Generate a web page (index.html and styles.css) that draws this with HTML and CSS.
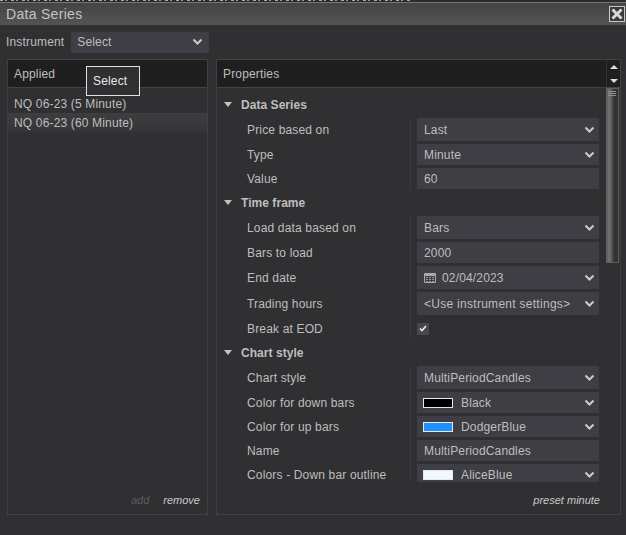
FILE: index.html
```html
<!DOCTYPE html>
<html lang="en">

<head>
  <meta charset="UTF-8">
  <title>Data Series</title>
  <link rel="stylesheet" href="styles.css">
</head>

<body>
  <div class="dialog">
    <div class="clip-strip"></div>
    <div class="titlebar">
      <span class="title">Data Series</span>
      <span class="close">
        <svg width="12" height="12" viewBox="0 0 12 12"><path d="M1.500 1.500l9 9M10.500 1.500l-9 9" stroke="#d8d8d8" stroke-width="3"/></svg>
      </span>
    </div>

    <div class="instrument">
      <span>Instrument</span>
      <div class="field select-box"><span>Select</span><svg class="chev" width="11" height="8" viewBox="0 0 11 8"><path d="M1.500 1.500l4 4 4-4" fill="none" stroke="#ccc" stroke-width="2"/></svg></div>
    </div>

    <div class="panels">
      <div class="panel applied">
        <div class="panel-head">Applied</div>
        <div class="tooltip">Select</div>
        <div class="list">
          <div class="list-item">NQ 06-23 (5 Minute)</div>
          <div class="list-item active">NQ 06-23 (60 Minute)</div>
        </div>
        <div class="panel-foot">
          <span class="link off">add</span>
          <span class="link">remove</span>
        </div>
      </div>

      <div class="panel props">
        <div class="panel-head">
          Properties
          <div class="spin">
            <svg width="8" height="4" viewBox="0 0 8 4"><path d="M4 0l4 4H0z" fill="#ddd"/></svg>
            <svg width="8" height="4" viewBox="0 0 8 4"><path d="M0 0h8L4 4z" fill="#ddd"/></svg>
          </div>
        </div>
        <div class="props-body">
          <div class="grid-area">
            <div class="group">
              <div class="group-title"><span class="caret"></span>Data Series</div>
              <div class="rows">
                <div class="row"><label>Price based on</label><div class="field"><span>Last</span><svg class="chev" width="11" height="8" viewBox="0 0 11 8"><path d="M1.500 1.500l4 4 4-4" fill="none" stroke="#ccc" stroke-width="2"/></svg></div></div>
                <div class="row"><label>Type</label><div class="field short"><span>Minute</span><svg class="chev" width="11" height="8" viewBox="0 0 11 8"><path d="M1.500 1.500l4 4 4-4" fill="none" stroke="#ccc" stroke-width="2"/></svg></div></div>
                <div class="row"><label>Value</label><div class="field short"><span>60</span></div></div>
              </div>
            </div>

            <div class="group">
              <div class="group-title"><span class="caret"></span>Time frame</div>
              <div class="rows">
                <div class="row"><label>Load data based on</label><div class="field"><span>Bars</span><svg class="chev" width="11" height="8" viewBox="0 0 11 8"><path d="M1.500 1.500l4 4 4-4" fill="none" stroke="#ccc" stroke-width="2"/></svg></div></div>
                <div class="row"><label>Bars to load</label><div class="field short"><span>2000</span></div></div>
                <div class="row"><label>End date</label><div class="field"><svg class="cal" width="12" height="10" viewBox="0 0 12 10"><path d="M.5 .5h11v9H.5z" fill="none" stroke="#aaa"/><path d="M1 2h10" stroke="#aaa" stroke-width="2"/><path d="M2 4.500h8M2 6.500h8M2 8.500h8" stroke="#999" stroke-dasharray="2 1"/></svg><span>02/04/2023</span><svg class="chev" width="11" height="8" viewBox="0 0 11 8"><path d="M1.500 1.500l4 4 4-4" fill="none" stroke="#ccc" stroke-width="2"/></svg></div></div>
                <div class="row"><label>Trading hours</label><div class="field"><span class="wide">&lt;Use instrument settings&gt;</span><svg class="chev" width="11" height="8" viewBox="0 0 11 8"><path d="M1.500 1.500l4 4 4-4" fill="none" stroke="#ccc" stroke-width="2"/></svg></div></div>
                <div class="row check-row"><label>Break at EOD</label><div class="check-cell"><span class="checkbox"><svg width="8" height="7" viewBox="0 0 8 7"><path d="M1 3.500l2 2 4-4.500" fill="none" stroke="#eee" stroke-width="1.600"/></svg></span></div></div>
              </div>
            </div>

            <div class="group">
              <div class="group-title"><span class="caret"></span>Chart style</div>
              <div class="rows">
                <div class="row"><label>Chart style</label><div class="field"><span>MultiPeriodCandles</span><svg class="chev" width="11" height="8" viewBox="0 0 11 8"><path d="M1.500 1.500l4 4 4-4" fill="none" stroke="#ccc" stroke-width="2"/></svg></div></div>
                <div class="row"><label>Color for down bars</label><div class="field short"><i class="swatch black"></i><span>Black</span><svg class="chev" width="11" height="8" viewBox="0 0 11 8"><path d="M1.500 1.500l4 4 4-4" fill="none" stroke="#ccc" stroke-width="2"/></svg></div></div>
                <div class="row"><label>Color for up bars</label><div class="field short"><i class="swatch blue"></i><span>DodgerBlue</span><svg class="chev" width="11" height="8" viewBox="0 0 11 8"><path d="M1.500 1.500l4 4 4-4" fill="none" stroke="#ccc" stroke-width="2"/></svg></div></div>
                <div class="row"><label>Name</label><div class="field short"><span>MultiPeriodCandles</span></div></div>
                <div class="row"><label>Colors - Down bar outline</label><div class="field short"><i class="swatch alice"></i><span>AliceBlue</span><svg class="chev" width="11" height="8" viewBox="0 0 11 8"><path d="M1.500 1.500l4 4 4-4" fill="none" stroke="#ccc" stroke-width="2"/></svg></div></div>
              </div>
            </div>
          </div>
          <div class="scrollbar"><div class="thumb"><b></b><b></b><b></b></div></div>
        </div>
        <div class="panel-foot"><span class="link">preset minute</span></div>
      </div>
    </div>
  </div>
</body>

</html>
```
FILE: styles.css
```css
* {
  box-sizing: border-box;
}

html,
body {
  height: 100%;
}

body {
  margin: 0;
  overflow: hidden;
  background-color: #303032;
  color: #bebebe;
  font-family: "Liberation Sans", Arial, sans-serif;
  font-size: 12px;
  letter-spacing: .16px;
}

.dialog {
  display: flex;
  flex-direction: column;
  height: 535px;
}

/* bottoms of the text of the window behind */
.clip-strip {
  flex: none;
  height: 2px;
  background-color: #2a2a2a;
  background-image: repeating-linear-gradient(to right, #aaa 0 3px, #2a2a2a 3px 5px, #999 5px 7px, #2a2a2a 7px 11px);
  background-size: 410px 1px;
  background-repeat: no-repeat;
}

.titlebar {
  display: flex;
  flex: none;
  align-items: center;
  justify-content: space-between;
  height: 23px;
  padding: 0 1px 1px 6px;
  border-top: 1px solid #777;
  background: linear-gradient(#444, #545454);
  font-size: 14px;
  letter-spacing: .3px;
}

.title {
  color: #c4c4c4;
}

.close {
  display: flex;
  align-items: center;
  justify-content: center;
  width: 16px;
  height: 16px;
  border: 1px solid #c8c8c8;
  background-color: #3a3a3a;
}

.instrument {
  display: flex;
  flex: none;
  align-items: center;
  gap: 7px;
  height: 34px;
  padding-left: 6px;
}

.field {
  display: flex;
  align-items: center;
  flex: none;
  height: 23px;
  padding: 0 4px 0 7px;
  background-color: #3e3e44;
  color: #bebebe;
}

.field.short {
  height: 21px;
}

.wide {
  letter-spacing: .28px;
}

.select-box {
  width: 138px;
  height: 21px;
  padding: 0 6px;
}

.chev {
  margin-left: auto;
}

.panels {
  display: flex;
  gap: 8px;
  padding: 0 5px 0 7px;
}

.panel {
  position: relative;
  display: flex;
  flex-direction: column;
  height: 456px;
  border: 1px solid #414143;
}

.applied {
  width: 201px;
}

.props {
  width: 405px;
}

.panel-head {
  display: flex;
  flex: none;
  align-items: center;
  justify-content: space-between;
  height: 28px;
  padding-left: 6px;
  border-bottom: 1px solid #444;
  background-color: #1f1f1f;
}

.spin {
  display: flex;
  flex-direction: column;
  align-items: center;
  justify-content: center;
  gap: 10px;
  width: 14px;
  height: 100%;
  border-left: 1px solid #333;
}

.spin svg {
  display: block;
}

.tooltip {
  position: absolute;
  top: 6px;
  left: 78px;
  width: 54px;
  height: 30px;
  padding: 7px 0 0 6px;
  border: 1px solid #e0e0e0;
  background-color: #303032;
  color: #e8e8e8;
}

.list {
  flex: 1;
  padding-top: 6px;
}

.list-item {
  height: 19px;
  padding: 3px 6px 0;
  line-height: 15px;
}

.list-item.active {
  background: linear-gradient(#3e3e40, #353537);
}

.panel-foot {
  display: flex;
  flex: none;
  justify-content: flex-end;
  gap: 14px;
  height: 32px;
  padding: 12px 7px 0 0;
  font-size: 11px;
  font-style: italic;
  letter-spacing: 0;
}

.props .panel-foot {
  padding-right: 20px;
}

.link {
  color: #c8c8c8;
}

.link.off {
  color: #5c5c5c;
}

.props-body {
  display: flex;
  flex: 1;
  min-height: 0;
}

.grid-area {
  flex: 1;
  min-width: 0;
  overflow: hidden;
  padding-top: 8px;
}

.group-title {
  display: flex;
  align-items: center;
  height: 17px;
  margin-bottom: 5px;
  padding-left: 7px;
  font-weight: bold;
  letter-spacing: .05px;
}

.caret {
  width: 0;
  height: 0;
  margin-right: 9px;
  border-top: 5px solid #c2c2c2;
  border-left: 4.500px solid transparent;
  border-right: 4.500px solid transparent;
}

.rows {
  position: relative;
  display: flex;
  flex-direction: column;
  gap: 3px;
  margin: 0 6px 5px 0;
}

/* column divider between names and values */
.rows::before {
  content: '';
  position: absolute;
  top: 0;
  bottom: 0;
  left: 193px;
  width: 1px;
  background-color: #3c3c3e;
}

.row {
  display: flex;
  align-items: center;
}

.row label {
  width: 194px;
  padding-left: 30px;
}

.row .field {
  flex: 1;
  margin-left: 6px;
}

.cal {
  margin-right: 6px;
}

.swatch {
  width: 30px;
  height: 10px;
  margin: 0 8px 0 -1px;
  border: 1px solid #e8e8e8;
}

.swatch.black {
  background-color: #000;
}

.swatch.blue {
  background-color: #1e90ff;
}

.swatch.alice {
  background-color: #f0f8ff;
}

.check-row {
  height: 21px;
}

.check-cell {
  display: flex;
  align-items: center;
  flex: 1;
  margin-left: 6px;
}

.checkbox {
  display: flex;
  align-items: center;
  justify-content: center;
  width: 12px;
  height: 12px;
  background-color: #47474c;
}

.scrollbar {
  flex: none;
  width: 15px;
  padding: 0 1px;
}

.thumb {
  display: flex;
  flex-direction: column;
  align-items: center;
  gap: 1px;
  height: 175px;
  padding-top: 2px;
  border: 1px solid #5e5e5e;
  border-left: none;
  background: linear-gradient(to right, #5a5a5a, #727272 30%, #4a4a4a 55%, #333 70%);
}

.thumb b {
  width: 8px;
  height: 1px;
  background-color: #8d8d8d;
}
```
